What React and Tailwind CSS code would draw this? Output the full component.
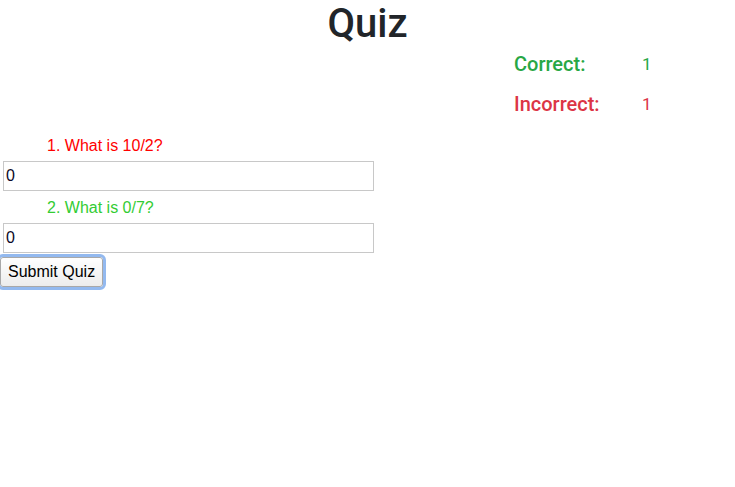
import React from 'react';

const questions = [
  { text: '1. What is 10/2?', color: 'text-[#ff0000]' },
  { text: '2. What is 0/7?', color: 'text-[#33cc33]' },
];

export default function App() {
  return (
    <div className="min-h-screen bg-white font-['Liberation_Sans',Arial,sans-serif]">
      {/* Title */}
      <h1 className="text-center text-[40px] leading-[48px] font-medium text-[#212529] font-['Roboto',sans-serif]">Quiz</h1>

      {/* Score */}
      <div className="-mt-[2px] pl-[514px] flex flex-col gap-1 text-[20px] leading-9 font-medium font-['Roboto',sans-serif]">
        <div className="grid grid-cols-[128px_auto] text-[#28a745]">
          <span>Correct:</span>
          <span className="font-normal text-[17px]">1</span>
        </div>
        <div className="grid grid-cols-[128px_auto] text-[#dc3545]">
          <span>Incorrect:</span>
          <span className="font-normal text-[17px]">1</span>
        </div>
      </div>

      {/* Questions */}
      <form className="mt-[12px] flex flex-col items-start" onSubmit={(e) => e.preventDefault()}>
        {questions.map((q, i) => (
          <div key={i} className={i === 0 ? 'flex flex-col' : 'flex flex-col mt-[5px]'}>
            <label className={`pl-[47px] text-[16px] leading-6 ${q.color}`}>{q.text}</label>
            <input
              type="text"
              defaultValue="0"
              className="mt-[3px] ml-[3px] w-[371px] h-[30px] border border-[#c8c8c8] px-[2px] text-[16px] text-[#0a0a28] outline-none"
            />
          </div>
        ))}
        <button
          type="submit"
          className="mt-[4px] h-[30px] px-[7px] text-[16px] text-black bg-gradient-to-b from-white to-[#ececec] border border-[#a8a8a8] rounded-[3px] outline-[3px] outline-solid outline-[#93b9ef]"
        >
          Submit Quiz
        </button>
      </form>
    </div>
  );
}
